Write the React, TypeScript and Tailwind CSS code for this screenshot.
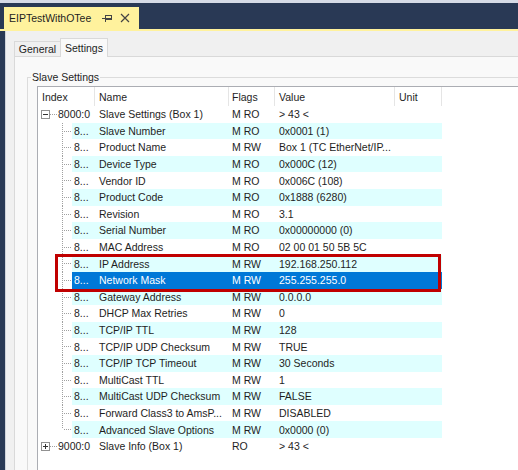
import React from 'react';

type Row = {
  name: string;
  flags: string;
  value: string;
};

const children: Row[] = [
  { name: 'Slave Number', flags: 'M RO', value: '0x0001 (1)' },
  { name: 'Product Name', flags: 'M RW', value: 'Box 1 (TC EtherNet/IP...' },
  { name: 'Device Type', flags: 'M RO', value: '0x000C (12)' },
  { name: 'Vendor ID', flags: 'M RO', value: '0x006C (108)' },
  { name: 'Product Code', flags: 'M RO', value: '0x1888 (6280)' },
  { name: 'Revision', flags: 'M RO', value: '3.1' },
  { name: 'Serial Number', flags: 'M RO', value: '0x00000000 (0)' },
  { name: 'MAC Address', flags: 'M RO', value: '02 00 01 50 5B 5C' },
  { name: 'IP Address', flags: 'M RW', value: '192.168.250.112' },
  { name: 'Network Mask', flags: 'M RW', value: '255.255.255.0' },
  { name: 'Gateway Address', flags: 'M RW', value: '0.0.0.0' },
  { name: 'DHCP Max Retries', flags: 'M RW', value: '0' },
  { name: 'TCP/IP TTL', flags: 'M RW', value: '128' },
  { name: 'TCP/IP UDP Checksum', flags: 'M RW', value: 'TRUE' },
  { name: 'TCP/IP TCP Timeout', flags: 'M RW', value: '30 Seconds' },
  { name: 'MultiCast TTL', flags: 'M RW', value: '1' },
  { name: 'MultiCast UDP Checksum', flags: 'M RW', value: 'FALSE' },
  { name: 'Forward Class3 to AmsP...', flags: 'M RW', value: 'DISABLED' },
  { name: 'Advanced Slave Options', flags: 'M RW', value: '0x0000 (0)' },
];

const SELECTED = 'Network Mask';

const ExpandBox = ({ open }: { open: boolean }) => (
  <svg width="20" height="9" className="block">
    <rect x="3.5" y="0.5" width="8" height="8" fill="#fff" stroke="#919191" />
    <line x1="5" y1="4.5" x2="10" y2="4.5" stroke="#333" />
    {!open && <line x1="7.5" y1="2" x2="7.5" y2="7" stroke="#333" />}
    <line x1="12" y1="4.5" x2="19" y2="4.5" stroke="#a0a0a0" strokeDasharray="1 1" />
  </svg>
);

const TopRow = ({ index, name, flags, value, open }: Row & { index: string; open: boolean }) => (
  <div className="flex h-[16.6px] items-center">
    <div className="w-[20px] flex items-center">
      <ExpandBox open={open} />
    </div>
    <div className="w-[37px]">{index}</div>
    <div className="w-[134px] pl-[4px]">{name}</div>
    <div className="w-[46px] pl-[3px]">{flags}</div>
    <div className="w-[120px] pl-[4px]">{value}</div>
  </div>
);

const ChildRow = ({ row, i, last }: { row: Row; i: number; last: boolean }) => {
  const selected = row.name === SELECTED;
  const bg = selected ? 'bg-[#0078d7] text-white' : i % 2 === 0 ? 'bg-[#dfffff]' : 'bg-white';
  return (
    <div className="flex h-[16.6px]">
      <svg className="w-[34px] h-full block" shapeRendering="crispEdges">
        <line x1="24.5" y1="0" x2="24.5" y2={last ? '50%' : '100%'} stroke="#a0a0a0" strokeDasharray="1 1" />
        <line x1="26" y1="50%" x2="34" y2="50%" stroke="#a0a0a0" strokeDasharray="1 1" />
      </svg>
      <div className={`flex items-center w-[370px] whitespace-nowrap ${bg}`}>
        <div className="w-[23px] pl-[2px]">8...</div>
        <div className="w-[134px] pl-[4px]">{row.name}</div>
        <div className="w-[46px] pl-[3px]">{row.flags}</div>
        <div className="w-[120px] pl-[4px]">{row.value}</div>
        <div className="w-[47px]" />
      </div>
    </div>
  );
};

export default function App() {
  return (
    <div className="relative w-[518px] h-[470px] overflow-hidden bg-[#293955] flex flex-col font-['Liberation_Sans',Arial,sans-serif] text-[10.5px] leading-[12px] text-[#1e1e1e]">
      {/* Document tab strip */}
      <div className="h-[3px] bg-[#d6dbe6]" />
      <div className="h-[26px] flex items-end pl-[4px]">
        <div className="h-[22px] w-[135px] bg-[#fff29d] flex items-center pl-[5px] text-[#1e1e1e]">
          <span>EIPTestWithOTee</span>
          <svg width="10" height="8" className="ml-[11px]" shapeRendering="crispEdges">
            <path d="M0 4.5H3.5M3.5 0.5V7.5M3.5 1.5H9.5V5.5H3.5M3.5 4.5H9.5" stroke="#444" fill="none" />
          </svg>
          <svg width="10" height="10" className="ml-[8px]">
            <path d="M1 1L9 9M9 1L1 9" stroke="#444" strokeWidth="1.2" fill="none" />
          </svg>
        </div>
      </div>
      <div className="h-[2px] bg-[#fff29d]" />

      <div className="flex-1 flex min-h-0">
        <div className="w-[5px]" />
        <div className="flex-1 bg-[#f0f0f0] border-l border-[#cfd3da] flex flex-col pt-[7px] pl-[8px]">
          {/* Property tabs */}
          <div className="flex items-end h-[19px] -mb-px relative z-10">
            <div className="h-[15px] mb-px w-[46px] border-l border-t border-[#d9d9d9] flex items-center justify-center">
              General
            </div>
            <div className="h-[19px] w-[48px] bg-[#f9f9f9] border-l border-t border-r border-[#d9d9d9] flex items-center justify-center">
              Settings
            </div>
          </div>

          {/* Tab page */}
          <div className="flex-1 bg-[#f9f9f9] border-l border-t border-[#d9d9d9] pt-[20px] pl-[12px] flex flex-col">
            <div className="relative flex-1 border-l border-t border-[#dcdcdc] pl-[9px] pt-[8px] flex flex-col">
              <span className="absolute left-[3px] top-[-7px] px-[1px] bg-[#f9f9f9]">Slave Settings</span>

              {/* List view */}
              <div className="flex-1 bg-white border-l border-t border-[#abadb3] whitespace-nowrap">
                <div className="flex h-[19px] items-stretch">
                  <div className="w-[57px] pl-[4px] border-r border-[#e5e5e5] flex items-center">Index</div>
                  <div className="w-[134px] pl-[4px] border-r border-[#e5e5e5] flex items-center">Name</div>
                  <div className="w-[46px] pl-[3px] border-r border-[#e5e5e5] flex items-center">Flags</div>
                  <div className="w-[120px] pl-[4px] border-r border-[#e5e5e5] flex items-center">Value</div>
                  <div className="w-[47px] pl-[4px] border-r border-[#e5e5e5] flex items-center">Unit</div>
                </div>
                <TopRow index="8000:0" name="Slave Settings (Box 1)" flags="M RO" value="> 43 <" open />
                {children.map((row, i) => (
                  <ChildRow key={row.name} row={row} i={i} last={i === children.length - 1} />
                ))}
                <TopRow index="9000:0" name="Slave Info (Box 1)" flags="RO" value="> 43 <" open={false} />
              </div>
            </div>
          </div>
        </div>
      </div>

      {/* Red highlight annotation */}
      <div className="absolute left-[55px] top-[254px] w-[386px] h-[38px] border-[3px] border-[#c00000]" />
    </div>
  );
}
